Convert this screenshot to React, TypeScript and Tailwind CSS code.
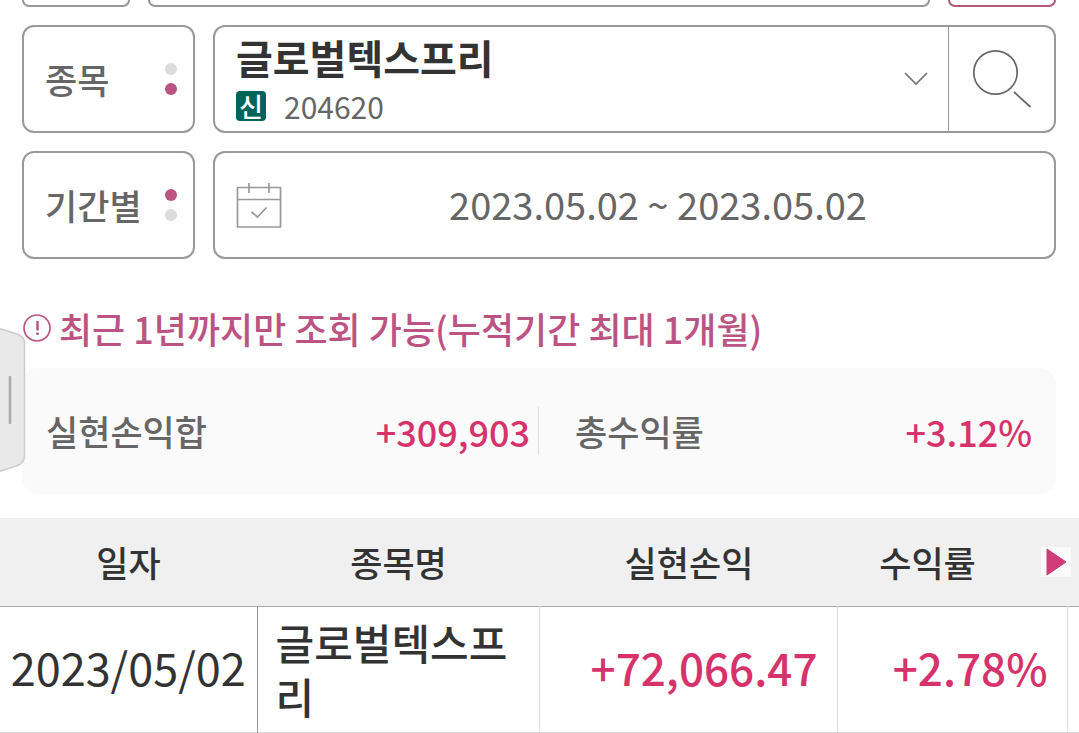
import { clsx } from "clsx";

const trades = [
  {
    date: "2023/05/02",
    name: "글로벌텍스프리",
    profit: "+72,066.47",
    rate: "+2.78%",
  },
];

function ModeButton({ label, active }: { label: string; active: 0 | 1 }) {
  return (
    <button
      type="button"
      className="flex h-[108px] w-[173px] shrink-0 items-center justify-between rounded-xl border-2 border-[#999] pl-[21px] pr-4 text-[35px] font-medium text-[#666]"
    >
      <span>{label}</span>
      <span className="flex flex-col gap-2">
        {[0, 1].map((i) => (
          <span
            key={i}
            className={clsx(
              "size-3 rounded-full",
              i === active ? "bg-[#bb5482]" : "bg-[#dcdcdc]"
            )}
          />
        ))}
      </span>
    </button>
  );
}

function SearchIcon() {
  return (
    <svg width="60" height="60" viewBox="0 0 60 60" fill="none" stroke="#666" strokeWidth="1.7">
      <circle cx="23.500" cy="23.500" r="21.700" />
      <path d="M42 43 58.500 58" />
    </svg>
  );
}

function CalendarIcon() {
  return (
    <svg
      width="46"
      height="46"
      viewBox="0 0 46 46"
      fill="none"
      stroke="#999"
      strokeWidth="1.7"
      className="shrink-0"
    >
      <path d="M1.500 5.500h43v39.500h-43zM1.500 17.500h43M13 1v10M33 1v10" />
      <path d="m15.500 30 6 5 9-9.500" />
    </svg>
  );
}

function NoticeIcon() {
  return (
    <svg width="28" height="28" viewBox="0 0 28 28" fill="none" stroke="#bb5482" strokeWidth="1.7">
      <circle cx="14" cy="14" r="13" />
      <path d="M14.500 7v9.500M14.500 18.500v2.500" strokeWidth="2.500" />
    </svg>
  );
}

function SideHandle() {
  return (
    <button type="button" aria-label="메뉴 열기" className="absolute left-0 top-[326px]">
      <svg width="26" height="148" viewBox="0 0 26 148" fill="none">
        <path
          d="M-2 2 17 8Q24.500 10.500 24.500 17v113q0 7-7 9.500L-2 146z"
          fill="#e9e9e9"
          stroke="#cdcdcd"
          strokeWidth="1.500"
        />
        <path d="M10 51v46" stroke="#aaa" strokeWidth="2.500" strokeLinecap="round" />
      </svg>
    </button>
  );
}

export default function App() {
  return (
    <main className="relative overflow-hidden bg-white font-['Noto_Sans_CJK_KR',sans-serif] text-[#333]">
      <div className="flex gap-[18px] pl-[22px] pr-[23px]">
        <div className="h-[7px] w-[108px] rounded-b-xl border-2 border-t-0 border-[#999]" />
        <div className="h-[7px] flex-1 rounded-b-xl border-2 border-t-0 border-[#999]" />
        <div className="h-[7px] w-[108px] rounded-b-xl border-2 border-t-0 border-[#b0587f]" />
      </div>

      <section className="mt-[18px] flex flex-col gap-[18px] pl-[22px] pr-[23px]">
        <div className="flex gap-[18px]">
          <ModeButton label="종목" active={1} />
          <div className="flex h-[108px] flex-1 rounded-xl border-2 border-[#999]">
            <button
              type="button"
              className="flex flex-1 items-center justify-between pl-[21px] pr-5 text-left"
            >
              <span className="flex flex-col">
                <span className="text-[40px] font-bold leading-[54px]">글로벌텍스프리</span>
                <span className="flex items-center gap-[18px]">
                  <span className="flex size-[30px] items-center justify-center rounded-sm bg-[#00635c] text-[26px] font-medium leading-none text-white">
                    신
                  </span>
                  <span className="text-[30px] leading-[44px] text-[#666]">204620</span>
                </span>
              </span>
              <svg width="24" height="14" viewBox="0 0 24 14" fill="none" stroke="#777" strokeWidth="1.700">
                <path d="m1 1 11 11L23 1" />
              </svg>
            </button>
            <button
              type="button"
              aria-label="종목 검색"
              className="flex w-[106px] items-center justify-center border-l border-[#999]"
            >
              <SearchIcon />
            </button>
          </div>
        </div>

        <div className="flex gap-[18px]">
          <ModeButton label="기간별" active={0} />
          <button
            type="button"
            className="flex h-[108px] flex-1 items-center rounded-xl border-2 border-[#999] pl-[21px] pr-5 text-[38px] text-[#666]"
          >
            <CalendarIcon />
            <span className="flex-1 pb-1">2023.05.02 ~ 2023.05.02</span>
          </button>
        </div>
      </section>

      <p className="mt-[42px] flex items-center gap-2 pl-[23px] text-[36px] font-medium leading-[54px] text-[#bb5482]">
        <NoticeIcon />
        최근 1년까지만 조회 가능(누적기간 최대 1개월)
      </p>

      <dl className="ml-[22px] mr-[23px] mt-[13px] grid h-[126px] grid-cols-2 items-center rounded-2xl bg-[#fafafa] text-[35px] font-medium">
        <div className="flex h-12 items-center justify-between border-r border-[#ddd] pl-6 pr-2">
          <dt className="text-[#666]">실현손익합</dt>
          <dd className="text-[36px] text-[#d6336c]">+309,903</dd>
        </div>
        <div className="flex h-12 items-center justify-between pl-9 pr-6">
          <dt className="text-[#666]">총수익률</dt>
          <dd className="text-[36px] text-[#d6336c]">+3.12%</dd>
        </div>
      </dl>

      <table className="mt-6 w-full table-fixed border-collapse">
        <colgroup>
          <col className="w-[257px]" />
          <col />
          <col className="w-[298px]" />
          <col className="w-[230px]" />
          <col className="w-[11px]" />
        </colgroup>
        <thead>
          <tr className="h-[88px] border-b border-[#aaa] bg-[#f0f0f0] text-[35px]">
            <th className="p-0 font-medium">일자</th>
            <th className="p-0 font-medium">종목명</th>
            <th className="p-0 font-medium">실현손익</th>
            <th colSpan={2} className="p-0 font-medium">
              <span className="flex items-center">
                <span className="flex-1">수익률</span>
                <button
                  type="button"
                  aria-label="다음 항목"
                  className="ml-6 mr-2 flex size-[30px] items-center justify-center bg-[#fafafa]"
                >
                  <svg width="22" height="28" viewBox="0 0 22 28">
                    <path
                      d="M2 1v26L21 14z"
                      fill="#cf3c78"
                      stroke="#cf3c78"
                      strokeLinejoin="round"
                    />
                  </svg>
                </button>
              </span>
            </th>
          </tr>
        </thead>
        <tbody>
          {trades.map((trade) => (
            <tr key={trade.date} className="h-[126px] border-b border-[#ddd]">
              <td className="whitespace-nowrap border-r border-[#999] px-0 pb-1 pt-0 text-center text-[45px]">
                {trade.date}
              </td>
              <td className="break-all border-r border-[#ddd] py-0 pl-[18px] pr-4 text-[42px] font-medium leading-[54px]">
                {trade.name}
              </td>
              <td className="border-r border-[#ddd] pb-1 pl-0 pr-5 pt-0 text-right text-[44px] font-medium text-[#d6336c]">
                {trade.profit}
              </td>
              <td className="border-r border-[#ddd] pb-1 pl-0 pr-5 pt-0 text-right text-[44px] font-medium text-[#d6336c]">
                {trade.rate}
              </td>
              <td className="p-0" />
            </tr>
          ))}
        </tbody>
      </table>

      <SideHandle />
    </main>
  );
}
